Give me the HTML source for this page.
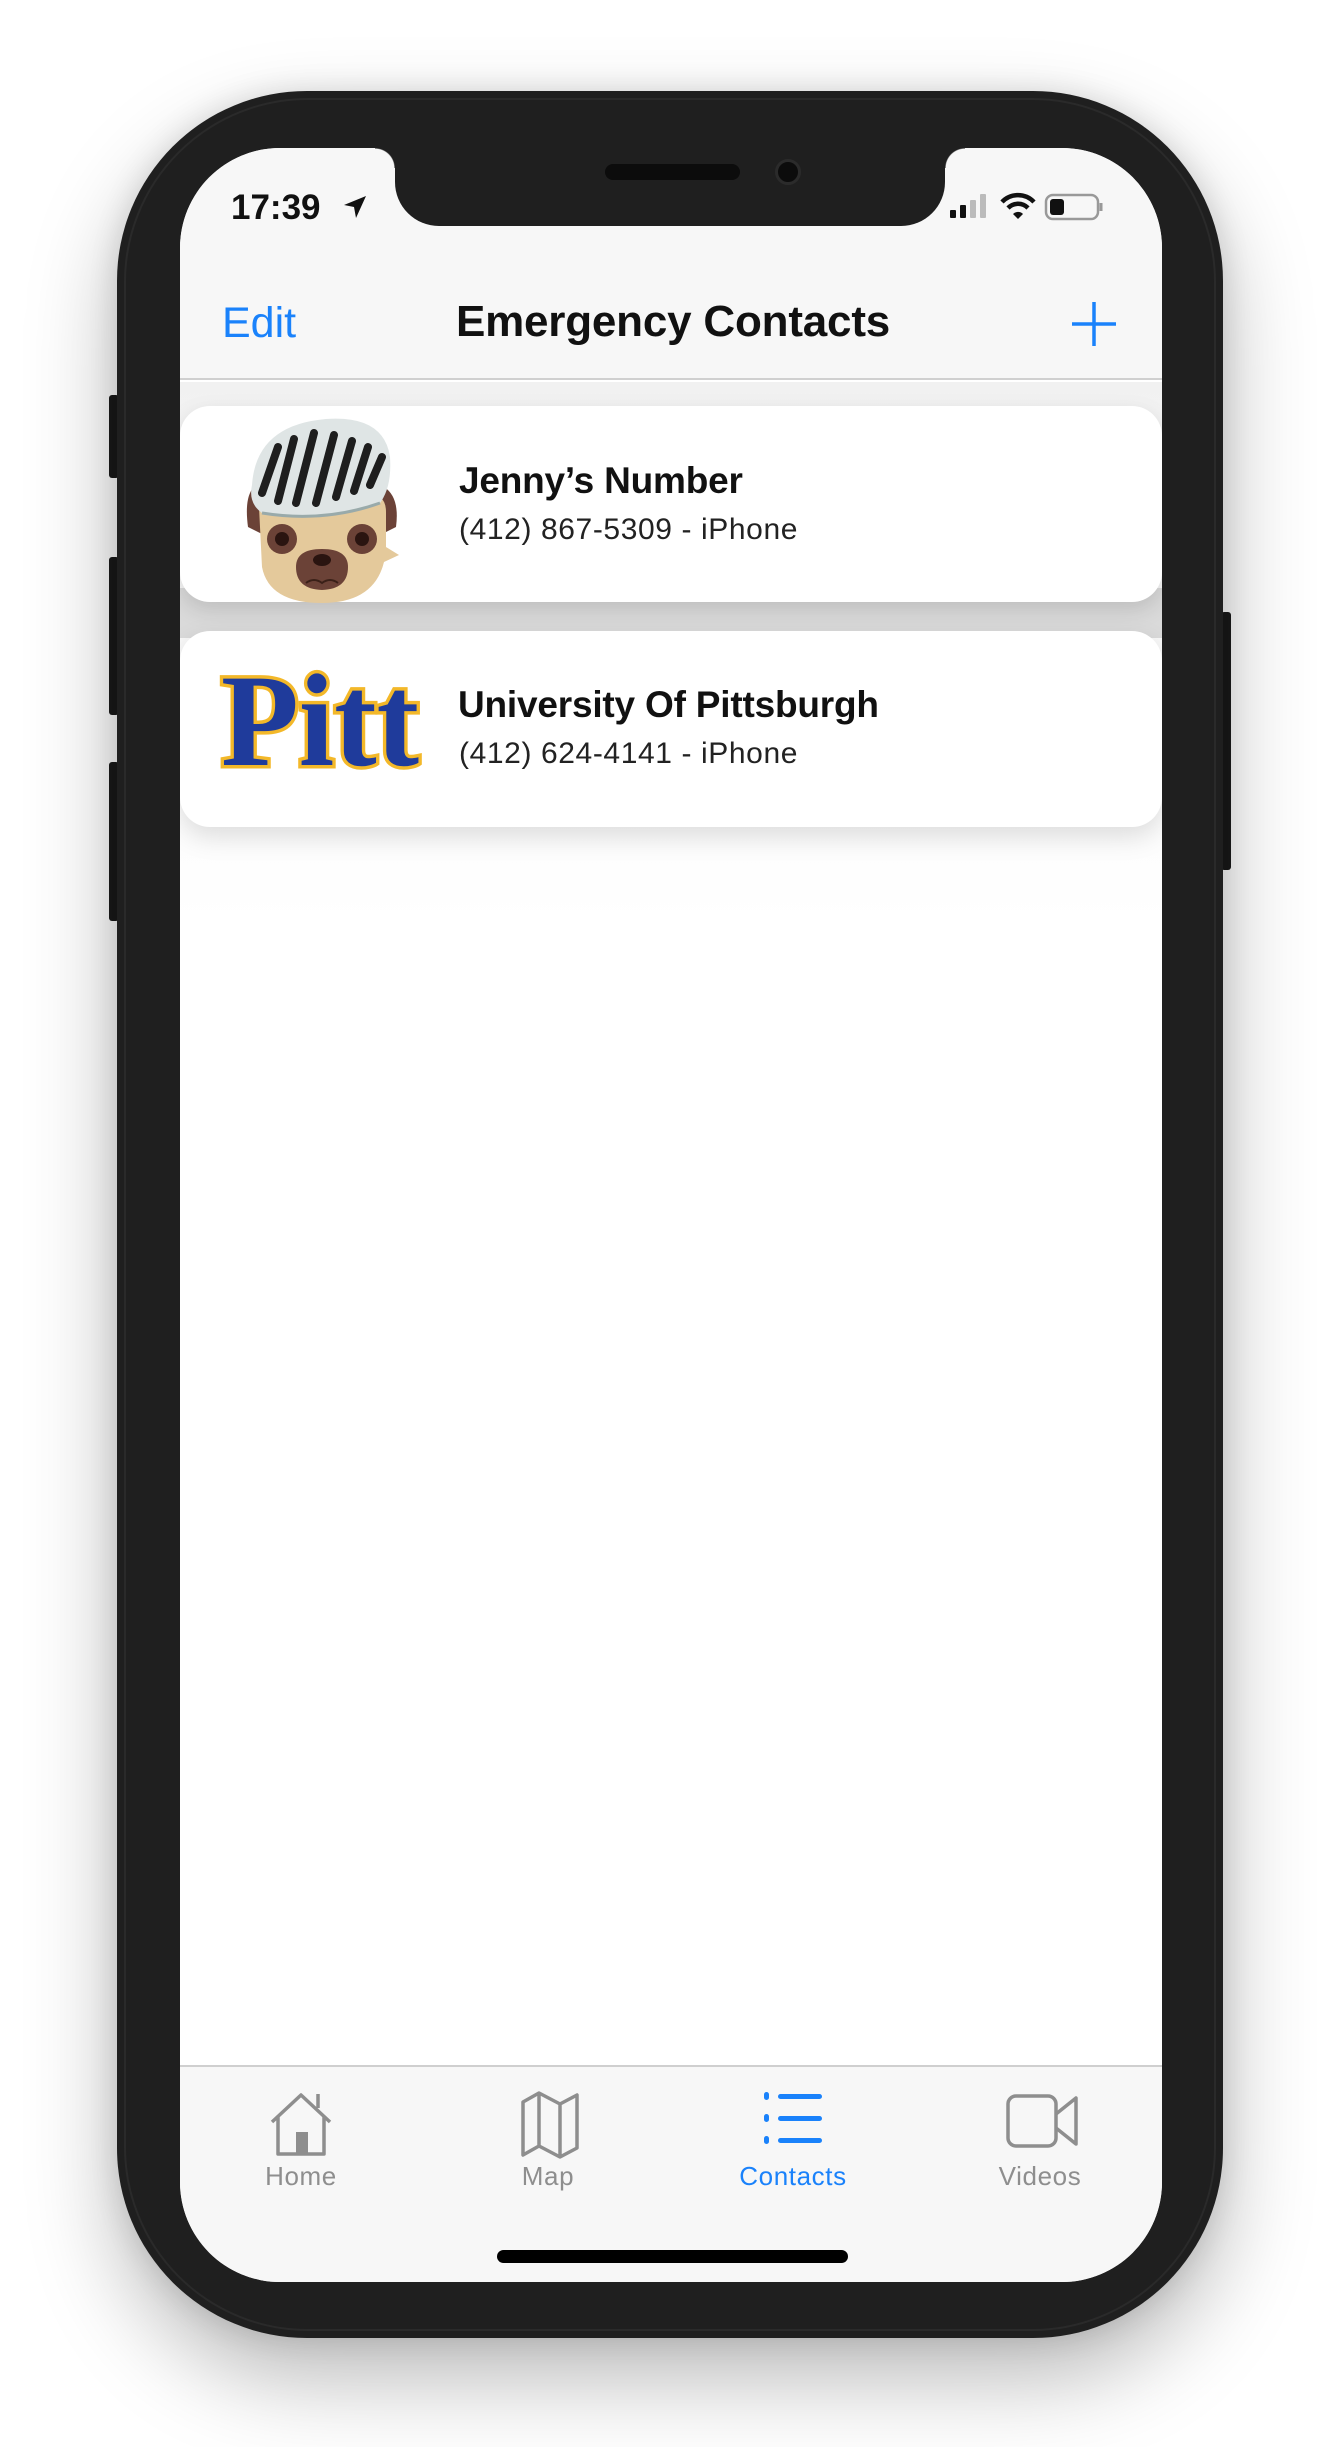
<!DOCTYPE html>
<html><head><meta charset="utf-8">
<style>
*{margin:0;padding:0;box-sizing:border-box}
body{width:1340px;height:2447px;background:#fff;position:relative;overflow:hidden;font-family:"Liberation Sans","DejaVu Sans",sans-serif}
.abs{position:absolute}
.phone{left:117px;top:91px;width:1106px;height:2247px;background:#1f1f1f;border-radius:190px;box-shadow:0 40px 90px rgba(0,0,0,.28),0 0 30px rgba(0,0,0,.12)}
.ring{left:124px;top:98px;width:1092px;height:2233px;border-radius:184px;border:2px solid #2a2a2a}
.btn{background:#1a1a1a;border-radius:3px}
.screen{left:180px;top:148px;width:982px;height:2134px;background:#fff;border-radius:100px;overflow:hidden}
.notch{left:215px;top:0;width:550px;height:78px;background:#1f1f1f;border-radius:0 0 44px 44px}
.card{left:0;width:982px;height:196px;background:#fff;border-radius:30px;box-shadow:0 8px 22px rgba(0,0,0,.13)}
.name{font-size:37px;font-weight:bold;color:#111;letter-spacing:-.2px}
.phn{font-size:30px;color:#222;letter-spacing:.6px}
.tl{font-size:26px;color:#8e8e8e;text-align:center;width:220px;letter-spacing:.6px}
</style></head><body>
<div class="abs btn" style="left:109px;top:395px;width:10px;height:83px"></div>
<div class="abs btn" style="left:109px;top:557px;width:10px;height:158px"></div>
<div class="abs btn" style="left:109px;top:762px;width:10px;height:159px"></div>
<div class="abs btn" style="left:1221px;top:612px;width:10px;height:258px"></div>
<div class="abs phone"></div>
<div class="abs ring"></div>
<div class="abs screen">
  <div class="abs" style="left:0;top:0;width:982px;height:232px;background:#f7f7f7;border-bottom:2px solid #d0d0d0"></div>
  <div class="abs notch"></div>
  <div class="abs" style="left:195px;top:0;width:20px;height:20px;background:radial-gradient(circle at 0 100%,transparent 19px,#1f1f1f 20px)"></div>
  <div class="abs" style="left:765px;top:0;width:20px;height:20px;background:radial-gradient(circle at 100% 100%,transparent 19px,#1f1f1f 20px)"></div>
  <div class="abs" style="left:425px;top:16px;width:135px;height:16px;background:#0c0c0c;border-radius:8px"></div>
  <div class="abs" style="left:595px;top:11px;width:26px;height:26px;background:#0c0c0c;border-radius:50%;border:3px solid #2b2b2b"></div>
  <div class="abs" style="left:51px;top:40px;font-size:35px;font-weight:bold;color:#111">17:39</div>
  <svg class="abs" style="left:162px;top:46px" width="26" height="26" viewBox="0 0 26 26"><path d="M24 2 L2 11 L12 13 L14 24 Z" fill="#111"/></svg>
  <svg class="abs" style="left:770px;top:44px" width="180" height="30" viewBox="0 0 180 30">
    <rect x="0" y="18" width="6" height="8" rx="1" fill="#111"/><rect x="10" y="13" width="6" height="13" rx="1" fill="#111"/><rect x="20" y="8" width="6" height="18" rx="1" fill="#bbb"/><rect x="30" y="2" width="6" height="24" rx="1" fill="#bbb"/>
    <path d="M52 10 A22 22 0 0 1 84 10" stroke="#111" stroke-width="4.5" fill="none"/><path d="M58 16 A14 14 0 0 1 78 16" stroke="#111" stroke-width="4.5" fill="none"/><path d="M63 22 L68 27 L73 22 A7 7 0 0 0 63 22Z" fill="#111"/>
    <rect x="96" y="3" width="52" height="24" rx="7" fill="none" stroke="#999" stroke-width="2.5"/><rect x="100" y="7" width="14" height="16" rx="3" fill="#111"/><path d="M151 11 v8" stroke="#999" stroke-width="3"/>
  </svg>
  <div class="abs" style="left:42px;top:151px;font-size:43px;color:#1a82fb">Edit</div>
  <div class="abs" style="left:0;top:149px;width:982px;text-align:center;font-size:44px;font-weight:bold;color:#111;letter-spacing:-.2px;padding-left:4px">Emergency Contacts</div>
  <svg class="abs" style="left:890px;top:152px" width="48" height="48" viewBox="0 0 48 48"><path d="M24 2v44M2 24h44" stroke="#1a82fb" stroke-width="3.5"/></svg>
  <div class="abs" style="left:0;top:234px;width:982px;height:600px;background:linear-gradient(#f1f1f1,#fff 90%)"></div>
  <div class="abs" style="left:0;top:440px;width:982px;height:50px;background:#dadada"></div>
  <div class="abs card" style="top:258px"></div>
  <div class="abs card" style="top:483px;box-shadow:0 10px 26px rgba(0,0,0,.13)"></div>
  <svg class="abs" style="left:54px;top:269px" width="175" height="188" viewBox="0 0 175 188">
    <path d="M20 70 Q10 80 14 110 L30 118 L40 80Z" fill="#6b4237"/>
    <path d="M150 70 Q166 80 162 110 L146 118 L136 80Z" fill="#6b4237"/>
    <path d="M25 90 Q25 80 40 78 L140 78 Q152 80 152 95 L152 130 L165 138 L150 145 Q140 186 88 186 Q35 186 28 150Z" fill="#e4c99b"/>
    <ellipse cx="48" cy="122" rx="15" ry="15" fill="#6b4237"/><circle cx="48" cy="122" r="7" fill="#2a1410"/>
    <ellipse cx="128" cy="122" rx="15" ry="15" fill="#6b4237"/><circle cx="128" cy="122" r="7" fill="#2a1410"/>
    <path d="M62 150 Q62 132 88 132 Q114 132 114 150 Q114 172 88 173 Q62 172 62 150Z" fill="#6b4237"/>
    <ellipse cx="88" cy="143" rx="9" ry="6" fill="#2a1410"/>
    <path d="M72 166 Q80 160 88 166 Q96 160 104 166" stroke="#3a2018" stroke-width="2" fill="none"/>
    <path d="M18 68 Q22 8 92 2 Q150 -2 156 40 Q158 70 146 86 Q90 106 28 96 Q14 86 18 68Z" fill="#dfe5e5"/>
    <path d="M28 76 L44 30 M44 84 L60 22 M62 86 L80 16 M82 86 L100 18 M102 80 L118 24 M120 74 L134 30 M136 68 L148 40" stroke="#1e1e1e" stroke-width="8" stroke-linecap="round"/>
    <path d="M28 96 Q90 106 146 86" stroke="#9aa" stroke-width="3" fill="none"/>
  </svg>
  <div class="abs name" style="left:279px;top:312px">Jenny’s Number</div>
  <div class="abs phn" style="left:279px;top:365px">(412) 867-5309 - iPhone</div>
  <svg class="abs" style="left:37px;top:505px" width="210" height="130" viewBox="0 0 210 130">
    <text x="4" y="112" font-family="Liberation Serif,serif" font-weight="bold" font-size="132" fill="#1f3b9b" stroke="#f3b829" stroke-width="7" paint-order="stroke" textLength="198" lengthAdjust="spacingAndGlyphs">Pitt</text>
  </svg>
  <div class="abs name" style="left:278px;top:536px">University Of Pittsburgh</div>
  <div class="abs phn" style="left:279px;top:589px">(412) 624-4141 - iPhone</div>
  <div class="abs" style="left:0;top:1917px;width:982px;height:217px;background:#f7f7f7;border-top:2px solid #cfcfcf"></div>
  <svg class="abs" style="left:88px;top:1944px" width="66" height="66" viewBox="0 0 66 66"><path d="M4 30 L33 3 L62 30 M10 24 V62 H56 V24 M50 16 V2" stroke="#8e8e8e" stroke-width="3.5" fill="none" stroke-linejoin="round"/><rect x="28" y="40" width="12" height="22" fill="#8e8e8e"/></svg>
  <svg class="abs" style="left:340px;top:1942px" width="60" height="70" viewBox="0 0 60 70"><path d="M3 12 L19 3 L40 14 L57 5 V58 L40 67 L19 56 L3 65Z M19 3 V56 M40 14 V67" stroke="#8e8e8e" stroke-width="3.5" fill="none" stroke-linejoin="round"/></svg>
  <svg class="abs" style="left:584px;top:1942px" width="60" height="60" viewBox="0 0 60 60"><g fill="#1a82fb"><rect x="0" y="2" width="5" height="8" rx="2.5"/><rect x="0" y="24" width="5" height="8" rx="2.5"/><rect x="0" y="46" width="5" height="8" rx="2.5"/><rect x="14" y="4" width="44" height="5" rx="2.5"/><rect x="14" y="26" width="44" height="5" rx="2.5"/><rect x="14" y="48" width="44" height="5" rx="2.5"/></g></svg>
  <svg class="abs" style="left:826px;top:1946px" width="74" height="54" viewBox="0 0 74 54"><rect x="2" y="2" width="48" height="50" rx="8" stroke="#8e8e8e" stroke-width="3.5" fill="none"/><path d="M50 20 L70 4 V50 L50 34" stroke="#8e8e8e" stroke-width="3.5" fill="none" stroke-linejoin="round"/></svg>
  <div class="abs tl" style="left:11px;top:2013px">Home</div>
  <div class="abs tl" style="left:258px;top:2013px">Map</div>
  <div class="abs tl" style="left:503px;top:2013px;color:#1a82fb">Contacts</div>
  <div class="abs tl" style="left:750px;top:2013px">Videos</div>
  <div class="abs" style="left:317px;top:2102px;width:351px;height:13px;background:#000;border-radius:7px"></div>
</div>
</body></html>
